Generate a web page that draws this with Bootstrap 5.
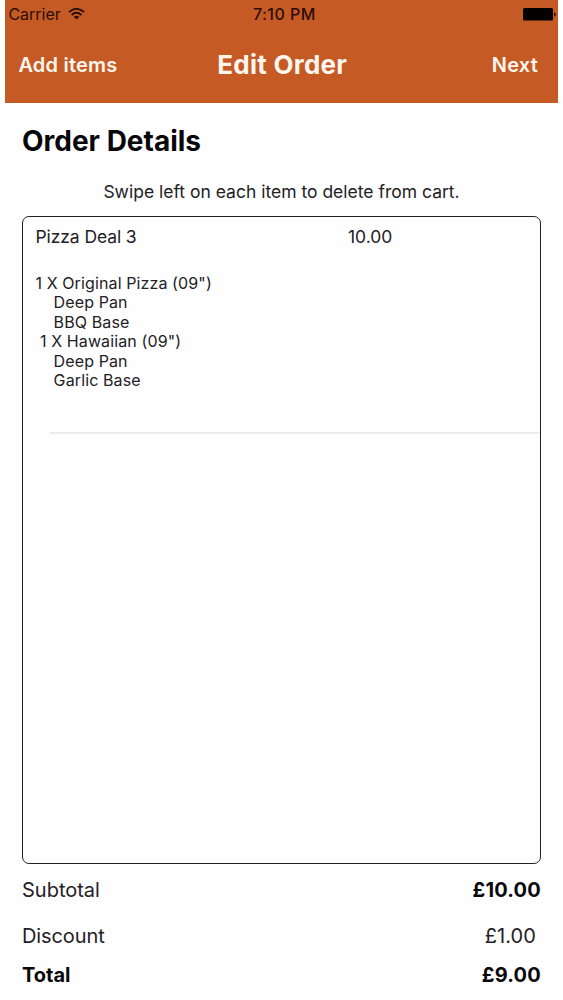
<!DOCTYPE html>
<html lang="en">
<head>
<meta charset="utf-8">
<meta name="viewport" content="width=device-width, initial-scale=1">
<title>Edit Order</title>
<link rel="stylesheet" href="https://cdn.jsdelivr.net/npm/bootstrap@5.3.0/dist/css/bootstrap.min.css">
<style>
body{font-family:Inter,"Liberation Sans",sans-serif;color:#232125;background:#fefefe;height:1000px;overflow:hidden}
.phone{width:552.6px;margin-left:5.4px;height:1000px}
.topbar{background:#c65a25;height:103px}
.status{height:28px;padding:0 2.5px 0 3px;font-size:16px;line-height:28px;color:#2b0d05}
.status>*{flex:1 1 0}
.status .wifi{margin:-1px 0 0 7px}
.clock{font-weight:500;font-size:16px;letter-spacing:.5px;padding-left:5px}
.actions{height:74px;padding:0 20px 0 13px;color:#fff6ee;font-weight:600;font-size:20px;line-height:74px}
.actions>*{flex:1 1 0}
.actions .side{letter-spacing:.22px}
.actions .title{font-size:26px;font-weight:700;flex:0 0 auto;letter-spacing:.25px;padding-left:8px}
.content{padding:0 17px 0 16.6px}
.heading{font-size:28px;font-weight:700;color:#08070a;line-height:36px;margin:20px 0 0}
.hint{font-size:17.5px;line-height:24px;margin:21px 0 0}
.cart{height:648px;margin-top:12px;border:1.5px solid #222024;border-radius:7px;width:519px}
.deal{font-size:17.5px;line-height:24px;padding:8px 0 0 12.5px}
.deal .name{width:312.5px;letter-spacing:-.1px}
.lines{font-size:16px;line-height:19.5px;padding:24.8px 0 0 12.5px;height:183px;white-space:pre;letter-spacing:.13px;word-spacing:-.1px}
.rule{height:2px;background:#ebebec;margin-left:27px}
.sums{font-size:20px;line-height:28px;color:#232125}
.discount{margin-top:18px;letter-spacing:-.1px}
.discount .amount{padding-right:5px;letter-spacing:.1px}
.total{margin-top:11px}
.strong{font-weight:700;color:#0b090c}
.strong .amount,.strong.amount{letter-spacing:.2px}
</style>
</head>
<body>
<main class="phone">
<header class="topbar">
<div class="status d-flex align-items-center">
<div class="d-flex align-items-center"><span>Carrier</span>
<svg class="wifi" width="17" height="13" viewBox="0 0 17 13" fill="none" stroke="#2b0d05" stroke-width="2"><path d="M1 5Q8.500-1.500 16 5M3.600 7.900Q8.500 3.700 13.400 7.900"/><path d="M5.700 9.800Q8.500 7.700 11.300 9.800L8.500 12.600Z" fill="#2b0d05" stroke="none"/></svg></div>
<div class="clock text-center">7:10 PM</div>
<div class="d-flex justify-content-end"><svg width="33" height="13" viewBox="0 0 33 13"><rect width="30" height="12.500" rx="1.500" fill="#050100"/><path d="M31 4.200Q32.800 4.500 32.800 6.300T31 8.400Z" fill="#2b0d05"/></svg></div>
</div>
<nav class="actions d-flex align-items-center">
<span class="side">Add items</span><span class="title">Edit Order</span><span class="side text-end">Next</span>
</nav>
</header>
<section class="content">
<h1 class="heading">Order Details</h1>
<p class="hint text-center">Swipe left on each item to delete from cart.</p>
<div class="cart">
<div class="deal d-flex"><span class="name">Pizza Deal 3</span><span>10.00</span></div>
<div class="lines">1 X Original Pizza (09")
    Deep Pan
    BBQ Base
 1 X Hawaiian (09")
    Deep Pan
    Garlic Base</div>
<div class="rule"></div>
</div>
<div class="sums">
<div class="d-flex justify-content-between pt-1 mt-2"><span>Subtotal</span><span class="strong amount">£10.00</span></div>
<div class="discount d-flex justify-content-between"><span>Discount</span><span class="amount">£1.00</span></div>
<div class="total d-flex justify-content-between strong"><span>Total</span><span class="amount">£9.00</span></div>
</div>
</section>
</main>
<script src="https://cdn.jsdelivr.net/npm/bootstrap@5.3.0/dist/js/bootstrap.bundle.min.js"></script>
</body>
</html>
